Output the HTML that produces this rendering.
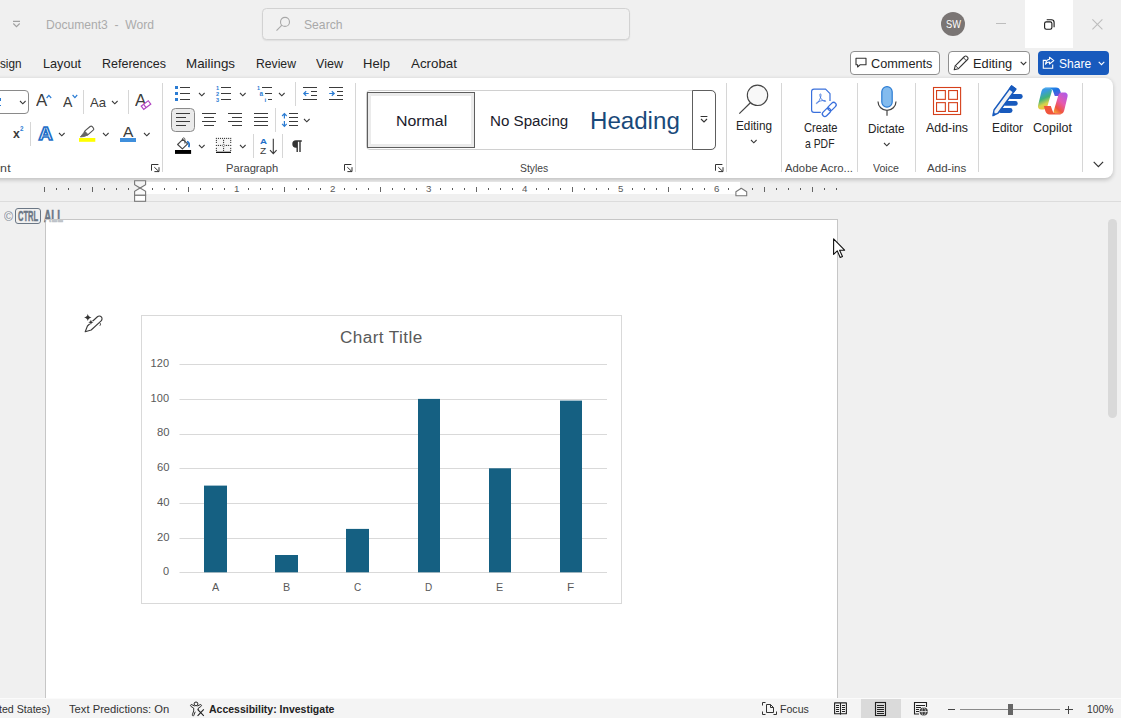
<!DOCTYPE html>
<html><head><meta charset="utf-8"><title>Document3 - Word</title>
<style>
html,body{margin:0;padding:0;}
html{width:1121px;height:718px;overflow:hidden;}
body{width:1121px;height:718px;overflow:hidden;background:#f0f0f0;font-family:"Liberation Sans",sans-serif;position:relative;}
.t{position:absolute;white-space:pre;display:block;}
.b{position:absolute;box-sizing:border-box;display:block;}
svg{overflow:visible;}
</style></head><body>
<div class="b" style="left:0px;top:0px;width:1121px;height:78px;background:#f0f0f0;"></div>
<svg class="b" style="left:12px;top:19px;" width="10" height="10" viewBox="0 0 10 10"><path d="M1 2.400h7M1.300 4.500l3.200 3.200 3.200-3.200" fill="none" stroke="#a0a0a0" stroke-width="1.100"/></svg>
<span class="t" style="left:46.00px;top:18.00px;font-size:13px;line-height:13px;color:#ababab;transform:scale(0.930,1.000);transform-origin:0 84.6%;">Document3  -  Word</span>
<div class="b" style="left:262px;top:7.5px;width:368px;height:32.5px;background:#f1f1f1;border:1px solid #d2d2d2;border-radius:4.5px;box-shadow:0 1px 1.5px rgba(0,0,0,0.07);"></div>
<svg class="b" style="left:276px;top:17px;" width="16" height="16" viewBox="0 0 16 16"><circle cx="9" cy="4.900" r="4.500" fill="none" stroke="#a8a8a8" stroke-width="1.100"/><path d="M5.900 8.200L0.500 13.700" stroke="#a8a8a8" stroke-width="1.100"/></svg>
<span class="t" style="left:304.30px;top:18.00px;font-size:13px;line-height:13px;color:#a9a9a9;transform:scale(0.935,1.000);transform-origin:0 84.6%;">Search</span>
<div class="b" style="left:941px;top:12px;width:24px;height:24px;background:#7a7574;border-radius:50%;"></div>
<span class="t" style="left:945.50px;top:18.75px;font-size:10.5px;line-height:10.5px;color:#fff;transform:scale(0.887,1.000);transform-origin:0 88.1%;">SW</span>
<div class="b" style="left:996px;top:23px;width:10px;height:1px;background:#bdbdbd;"></div>
<div class="b" style="left:1025px;top:0px;width:48px;height:48px;background:#fff;"></div>
<svg class="b" style="left:1043.5px;top:18.5px;" width="12" height="12" viewBox="0 0 12 12"><rect x="0.600" y="2.900" width="7.300" height="7.300" rx="1.700" fill="none" stroke="#1a1a1a" stroke-width="1.100"/><path d="M2.700 0.800h4.700a2.700 2.700 0 0 1 2.700 2.700v4.700" fill="none" stroke="#1a1a1a" stroke-width="1.100"/></svg>
<svg class="b" style="left:1091.5px;top:19px;" width="12" height="12" viewBox="0 0 12 12"><path d="M0.400 0.400l10 10M10.400 0.400l-10 10" stroke="#bdbdbd" stroke-width="1.100"/></svg>
<span class="t" style="left:0.00px;top:57.00px;font-size:13px;line-height:13px;color:#242424;transform:scale(0.901,1.000);transform-origin:0 84.6%;">sign</span>
<span class="t" style="left:43.00px;top:57.00px;font-size:13px;line-height:13px;color:#242424;transform:scale(0.974,1.000);transform-origin:0 84.6%;">Layout</span>
<span class="t" style="left:102.00px;top:57.00px;font-size:13px;line-height:13px;color:#242424;transform:scale(0.962,1.000);transform-origin:0 84.6%;">References</span>
<span class="t" style="left:186.00px;top:57.00px;font-size:13px;line-height:13px;color:#242424;letter-spacing:-0.00px;transform:scale(1.028,1.000);transform-origin:0 84.6%;">Mailings</span>
<span class="t" style="left:256.00px;top:57.00px;font-size:13px;line-height:13px;color:#242424;transform:scale(0.937,1.000);transform-origin:0 84.6%;">Review</span>
<span class="t" style="left:316.00px;top:57.00px;font-size:13px;line-height:13px;color:#242424;transform:scale(0.965,1.000);transform-origin:0 84.6%;">View</span>
<span class="t" style="left:363.00px;top:57.00px;font-size:13px;line-height:13px;color:#242424;letter-spacing:0.08px;">Help</span>
<span class="t" style="left:411.00px;top:57.00px;font-size:13px;line-height:13px;color:#242424;transform:scale(1.026,1.000);transform-origin:0 84.6%;">Acrobat</span>
<div class="b" style="left:850px;top:51px;width:90px;height:24px;background:#fff;border:1px solid #8f8f8f;border-radius:4px;"></div>
<svg class="b" style="left:855px;top:57px;" width="12" height="12" viewBox="0 0 12 12"><path d="M1 1.2h10v6.6H5L2.6 10V7.8H1z" fill="none" stroke="#333" stroke-width="1.1" stroke-linejoin="round"/></svg>
<span class="t" style="left:871.30px;top:57.00px;font-size:13px;line-height:13px;color:#242424;transform:scale(0.977,1.000);transform-origin:0 84.6%;">Comments</span>
<div class="b" style="left:948px;top:51px;width:82px;height:24px;background:#fff;border:1px solid #8f8f8f;border-radius:4px;"></div>
<svg class="b" style="left:953px;top:55px;" width="16" height="16" viewBox="0 0 16 16"><path d="M1.2 14.8l1-4L11.5 1.5a1.6 1.6 0 0 1 2.4 0l.6.6a1.6 1.6 0 0 1 0 2.4L5.2 13.8z" fill="none" stroke="#333" stroke-width="1.1" stroke-linejoin="round"/><path d="M2.400 10.600l3 3M10.400 2.700l3 3" stroke="#333" stroke-width="0.900"/></svg>
<span class="t" style="left:973.30px;top:57.00px;font-size:13px;line-height:13px;color:#242424;transform:scale(0.984,1.000);transform-origin:0 84.6%;">Editing</span>
<svg class="b" style="left:1019.5px;top:61px;" width="7" height="5" viewBox="0 0 7 5"><path d="M0.7 0.8l2.8 2.8 2.8-2.8" fill="none" stroke="#333" stroke-width="1.1"/></svg>
<div class="b" style="left:1038px;top:51px;width:71px;height:24px;background:#185abd;border-radius:4px;"></div>
<svg class="b" style="left:1042px;top:56px;" width="13" height="13" viewBox="0 0 13 13"><path d="M4.200 4.400H1.300V12.200H10.700V8.600" fill="none" stroke="#fff" stroke-width="1.100"/><path d="M7.5 1.2L11.8 4.6 7.5 8V6C5.5 6 4.3 6.8 3.5 8.2 3.8 5.4 5.2 3.6 7.5 3.3z" fill="none" stroke="#fff" stroke-width="1.1" stroke-linejoin="round"/></svg>
<span class="t" style="left:1059.30px;top:57.00px;font-size:13px;line-height:13px;color:#fff;transform:scale(0.926,1.000);transform-origin:0 84.6%;">Share</span>
<svg class="b" style="left:1097.5px;top:61px;" width="7" height="5" viewBox="0 0 7 5"><path d="M0.7 0.8l2.8 2.8 2.8-2.8" fill="none" stroke="#fff" stroke-width="1.1"/></svg>
<div class="b" style="left:-20px;top:78px;width:1133px;height:99.5px;background:#fff;border-radius:0 8px 8px 0;box-shadow:0 1.5px 4px rgba(0,0,0,0.2);"></div>
<div class="b" style="left:162.0px;top:83px;width:1px;height:89px;background:#d6d6d6;"></div>
<div class="b" style="left:355.0px;top:83px;width:1px;height:89px;background:#d6d6d6;"></div>
<div class="b" style="left:726.0px;top:83px;width:1px;height:89px;background:#d6d6d6;"></div>
<div class="b" style="left:781.0px;top:83px;width:1px;height:89px;background:#d6d6d6;"></div>
<div class="b" style="left:857.0px;top:83px;width:1px;height:89px;background:#d6d6d6;"></div>
<div class="b" style="left:915.0px;top:83px;width:1px;height:89px;background:#d6d6d6;"></div>
<div class="b" style="left:978.0px;top:83px;width:1px;height:89px;background:#d6d6d6;"></div>
<div class="b" style="left:1082.0px;top:83px;width:1px;height:89px;background:#d6d6d6;"></div>
<span class="t" style="left:0.00px;top:162.20px;font-size:11.6px;line-height:11.6px;color:#444;letter-spacing:0.41px;transform:scale(1.070,1.000);transform-origin:0 84.5%;">nt</span>
<span class="t" style="left:225.50px;top:162.20px;font-size:11.6px;line-height:11.6px;color:#444;transform:scale(0.965,1.000);transform-origin:0 84.5%;">Paragraph</span>
<span class="t" style="left:519.50px;top:162.20px;font-size:11.6px;line-height:11.6px;color:#444;transform:scale(0.893,1.000);transform-origin:0 84.5%;">Styles</span>
<span class="t" style="left:785.00px;top:162.20px;font-size:11.6px;line-height:11.6px;color:#444;transform:scale(0.976,1.000);transform-origin:0 84.5%;">Adobe Acro...</span>
<span class="t" style="left:873.40px;top:162.20px;font-size:11.6px;line-height:11.6px;color:#444;transform:scale(0.912,1.000);transform-origin:0 84.5%;">Voice</span>
<span class="t" style="left:927.30px;top:162.20px;font-size:11.6px;line-height:11.6px;color:#444;transform:scale(0.997,1.000);transform-origin:0 84.5%;">Add-ins</span>
<div class="b" style="left:-10px;top:90px;width:38.5px;height:24px;background:#fff;border:1px solid #8a8a8a;border-radius:4px;"></div>
<div class="b" style="left:0px;top:98.3px;width:0.9px;height:2.8px;background:#2b7cd3;"></div>
<div class="b" style="left:0px;top:104.6px;width:1px;height:1.3px;background:#2b7cd3;"></div>
<svg class="b" style="left:18.5px;top:99.9px;" width="7.6" height="4.8" viewBox="0 0 7.6 4.8"><path d="M1 1l2.8 2.8 2.8 -2.8" fill="none" stroke="#3b3b3b" stroke-width="1.1"/></svg>
<span class="t" style="left:36.00px;top:92.40px;font-size:17.2px;line-height:17.2px;color:#3b3b3b;transform:scale(0.976,1.000);transform-origin:0 84.9%;">A</span>
<svg class="b" style="left:45.7px;top:94.3px;" width="6" height="5" viewBox="0 0 6 5"><path d="M0.6 4l2.3-2.6L5.2 4" fill="none" stroke="#2b7cd3" stroke-width="1.2"/></svg>
<span class="t" style="left:63.30px;top:95.00px;font-size:14px;line-height:14px;color:#3b3b3b;transform:scale(1.006,1.000);transform-origin:0 85.7%;">A</span>
<svg class="b" style="left:71.7px;top:94.3px;" width="6" height="5" viewBox="0 0 6 5"><path d="M0.6 1l2.3 2.6L5.2 1" fill="none" stroke="#2b7cd3" stroke-width="1.2"/></svg>
<div class="b" style="left:83px;top:90px;width:1px;height:24px;background:#d6d6d6;"></div>
<span class="t" style="left:90.40px;top:96.70px;font-size:12.6px;line-height:12.6px;color:#3b3b3b;letter-spacing:0.00px;transform:scale(1.043,1.000);transform-origin:0 81.7%;">Aa</span>
<svg class="b" style="left:110.8px;top:99.9px;" width="7.6" height="4.8" viewBox="0 0 7.6 4.8"><path d="M1 1l2.8 2.8 2.8 -2.8" fill="none" stroke="#3b3b3b" stroke-width="1.1"/></svg>
<div class="b" style="left:128px;top:90px;width:1px;height:24px;background:#d6d6d6;"></div>
<span class="t" style="left:135.30px;top:92.40px;font-size:17.2px;line-height:17.2px;color:#3b3b3b;transform:scale(0.984,1.000);transform-origin:0 84.9%;">A</span>
<svg class="b" style="left:0px;top:0px;" width="160" height="115" viewBox="0 0 160 115"><g transform="rotate(-37 146 105.100)" fill="#fff" stroke="#b146c2" stroke-width="1.200"><rect x="141.600" y="103" width="8.800" height="4.200"/><path d="M144.600 103v4.200"/></g></svg>
<span class="t" style="left:12.60px;top:127.00px;font-size:13px;line-height:13px;color:#3b3b3b;transform:scale(0.942,1.000);transform-origin:0 84.6%;font-weight:bold;">x</span>
<span class="t" style="left:19.90px;top:124.90px;font-size:7.2px;line-height:7.2px;color:#2b7cd3;transform:scale(0.876,1.000);transform-origin:0 84.7%;font-weight:bold;">2</span>
<div class="b" style="left:30px;top:122px;width:1px;height:24px;background:#d6d6d6;"></div>
<svg class="b" style="left:36px;top:124px;" width="19" height="18" viewBox="0 0 19 18"><text x="9.5" y="15.8" text-anchor="middle" font-family="Liberation Sans" font-weight="bold" font-size="18.800" fill="#fff" stroke="#1e6fc8" stroke-width="1.600" textLength="14.200" lengthAdjust="spacingAndGlyphs">A</text></svg>
<svg class="b" style="left:58.2px;top:131.9px;" width="7.6" height="4.8" viewBox="0 0 7.6 4.8"><path d="M1 1l2.8 2.8 2.8 -2.8" fill="none" stroke="#3b3b3b" stroke-width="1.1"/></svg>
<svg class="b" style="left:0px;top:0px;" width="160" height="145" viewBox="0 0 160 145"><g transform="rotate(-40 89 130.600)"><rect x="84.200" y="128.200" width="9.800" height="4.800" rx="1.500" fill="#fff" stroke="#555" stroke-width="1.100"/></g><path d="M84.900 131.300l3.300 3.400-3.600 1.700-4.300.6z" fill="#666" stroke="#666" stroke-width="0.800" stroke-linejoin="round"/><rect x="79" y="138" width="16.300" height="3.800" fill="#ffff00"/></svg>
<svg class="b" style="left:101.5px;top:131.9px;" width="7.6" height="4.8" viewBox="0 0 7.6 4.8"><path d="M1 1l2.8 2.8 2.8 -2.8" fill="none" stroke="#3b3b3b" stroke-width="1.1"/></svg>
<span class="t" style="left:123.40px;top:123.90px;font-size:15.2px;line-height:15.2px;color:#3b3b3b;transform:scale(1.025,1.000);transform-origin:0 86.2%;">A</span>
<div class="b" style="left:120px;top:138px;width:16.2px;height:4px;background:#3f8fdc;"></div>
<svg class="b" style="left:142.7px;top:131.9px;" width="7.6" height="4.8" viewBox="0 0 7.6 4.8"><path d="M1 1l2.8 2.8 2.8 -2.8" fill="none" stroke="#3b3b3b" stroke-width="1.1"/></svg>
<svg class="b" style="left:151px;top:164px;" width="9" height="9" viewBox="0 0 9 9"><path d="M0.500 6.700V0.500H7.400" fill="none" stroke="#333" stroke-width="1"/><path d="M3.300 3.200L7.700 7.300M8 3.200V7.600H3.400" fill="none" stroke="#333" stroke-width="1"/></svg>
<div class="b" style="left:171px;top:108px;width:24px;height:24px;background:#ebebeb;border:1px solid #8a8a8a;border-radius:4.5px;"></div>
<svg class="b" style="left:0px;top:0px;" width="400" height="180" viewBox="0 0 400 180"><g shape-rendering="crispEdges"><rect x="175" y="86" width="3" height="3" fill="#2b7cd3"/><rect x="180" y="87" width="10" height="1" fill="#3b3b3b"/><rect x="175" y="92" width="3" height="3" fill="#2b7cd3"/><rect x="180" y="93" width="10" height="1" fill="#3b3b3b"/><rect x="175" y="98" width="3" height="3" fill="#2b7cd3"/><rect x="180" y="99" width="10" height="1" fill="#3b3b3b"/><rect x="221" y="87" width="10" height="1" fill="#3b3b3b"/><rect x="221" y="93" width="10" height="1" fill="#3b3b3b"/><rect x="221" y="99" width="10" height="1" fill="#3b3b3b"/><rect x="262" y="87" width="10" height="1" fill="#3b3b3b"/><rect x="265" y="93" width="7" height="1" fill="#3b3b3b"/><rect x="268" y="99" width="4" height="1" fill="#3b3b3b"/><rect x="303" y="87" width="14" height="1" fill="#3b3b3b"/><rect x="311" y="91" width="6" height="1" fill="#3b3b3b"/><rect x="311" y="95" width="6" height="1" fill="#3b3b3b"/><rect x="303" y="99" width="14" height="1" fill="#3b3b3b"/><rect x="329" y="87" width="14" height="1" fill="#3b3b3b"/><rect x="337" y="91" width="6" height="1" fill="#3b3b3b"/><rect x="337" y="95" width="6" height="1" fill="#3b3b3b"/><rect x="329" y="99" width="14" height="1" fill="#3b3b3b"/><rect x="176" y="113" width="14" height="1" fill="#3b3b3b"/><rect x="202" y="113" width="14" height="1" fill="#3b3b3b"/><rect x="228" y="113" width="14" height="1" fill="#3b3b3b"/><rect x="254" y="113" width="14" height="1" fill="#3b3b3b"/><rect x="289" y="113" width="9" height="1" fill="#3b3b3b"/><rect x="176" y="117" width="10" height="1" fill="#3b3b3b"/><rect x="204" y="117" width="10" height="1" fill="#3b3b3b"/><rect x="232" y="117" width="10" height="1" fill="#3b3b3b"/><rect x="254" y="117" width="14" height="1" fill="#3b3b3b"/><rect x="289" y="117" width="9" height="1" fill="#3b3b3b"/><rect x="176" y="121" width="14" height="1" fill="#3b3b3b"/><rect x="202" y="121" width="14" height="1" fill="#3b3b3b"/><rect x="228" y="121" width="14" height="1" fill="#3b3b3b"/><rect x="254" y="121" width="14" height="1" fill="#3b3b3b"/><rect x="289" y="121" width="9" height="1" fill="#3b3b3b"/><rect x="176" y="125" width="10" height="1" fill="#3b3b3b"/><rect x="204" y="125" width="10" height="1" fill="#3b3b3b"/><rect x="232" y="125" width="10" height="1" fill="#3b3b3b"/><rect x="254" y="125" width="14" height="1" fill="#3b3b3b"/><rect x="289" y="125" width="9" height="1" fill="#3b3b3b"/></g><text x="216" y="89.6" font-family="Liberation Sans" font-weight="bold" font-size="5.600" fill="#2b7cd3">1</text><text x="216" y="95.6" font-family="Liberation Sans" font-weight="bold" font-size="5.600" fill="#2b7cd3">2</text><text x="216" y="101.6" font-family="Liberation Sans" font-weight="bold" font-size="5.600" fill="#2b7cd3">3</text><text x="257" y="89.600" font-family="Liberation Sans" font-weight="bold" font-size="5.400" fill="#2b7cd3">1</text><text x="259.600" y="96" font-family="Liberation Sans" font-weight="bold" font-size="6.400" fill="#2b7cd3">a</text><text x="264.600" y="101.600" font-family="Liberation Sans" font-weight="bold" font-size="6" fill="#2b7cd3">i</text><path d="M308.700 93.500H303.900M306.200 91.200L303.800 93.500 306.200 95.800" fill="none" stroke="#2b7cd3" stroke-width="1.200"/><path d="M329.200 93.500H334.200M331.800 91.200l2.400 2.300-2.400 2.300" fill="none" stroke="#2b7cd3" stroke-width="1.200"/><path d="M284.400 113.700v4.800M282.100 116L284.400 113.600 286.700 116M284.400 121v5.200M282.100 123.900L284.400 126.300 286.700 123.900" fill="none" stroke="#2b7cd3" stroke-width="1.200"/></svg>
<svg class="b" style="left:197.7px;top:92.1px;" width="7.6" height="4.8" viewBox="0 0 7.6 4.8"><path d="M1 1l2.8 2.8 2.8 -2.8" fill="none" stroke="#3b3b3b" stroke-width="1.1"/></svg>
<svg class="b" style="left:238.5px;top:92.1px;" width="7.6" height="4.8" viewBox="0 0 7.6 4.8"><path d="M1 1l2.8 2.8 2.8 -2.8" fill="none" stroke="#3b3b3b" stroke-width="1.1"/></svg>
<svg class="b" style="left:277.6px;top:92.1px;" width="7.6" height="4.8" viewBox="0 0 7.6 4.8"><path d="M1 1l2.8 2.8 2.8 -2.8" fill="none" stroke="#3b3b3b" stroke-width="1.1"/></svg>
<svg class="b" style="left:302.6px;top:118.2px;" width="7.6" height="4.8" viewBox="0 0 7.6 4.8"><path d="M1 1l2.8 2.8 2.8 -2.8" fill="none" stroke="#3b3b3b" stroke-width="1.1"/></svg>
<svg class="b" style="left:197.7px;top:144.1px;" width="7.6" height="4.8" viewBox="0 0 7.6 4.8"><path d="M1 1l2.8 2.8 2.8 -2.8" fill="none" stroke="#3b3b3b" stroke-width="1.1"/></svg>
<svg class="b" style="left:238.5px;top:144.1px;" width="7.6" height="4.8" viewBox="0 0 7.6 4.8"><path d="M1 1l2.8 2.8 2.8 -2.8" fill="none" stroke="#3b3b3b" stroke-width="1.1"/></svg>
<div class="b" style="left:295px;top:82px;width:1px;height:24px;background:#d6d6d6;"></div>
<div class="b" style="left:275px;top:108px;width:1px;height:24px;background:#d6d6d6;"></div>
<svg class="b" style="left:0px;top:0px;" width="200" height="160" viewBox="0 0 200 160"><path d="M177.600 144.500L182.800 139.400 187.600 143.800 182.400 148.800z" fill="#fff" stroke="#444" stroke-width="1.100" stroke-linejoin="round"/><path d="M182.400 139.800c-.2-1.100.3-1.800 1.100-1.900.9-.1 1.400.6 1.400 1.800v3.900" fill="none" stroke="#444" stroke-width="0.900"/><path d="M186.900 141.600c2 .300 2.900 2.400 1.900 5.700" fill="none" stroke="#1e6fc8" stroke-width="1.700"/><rect x="175" y="150" width="16.100" height="3.900" fill="#000"/></svg>
<svg class="b" style="left:0px;top:0px;" width="240" height="160" viewBox="0 0 240 160"><rect x="216.900" y="138.900" width="13.300" height="12.600" fill="#f6f6f6"/><g fill="#333"><rect x="215.85" y="137.85" width="1.100" height="1.100"/><rect x="215.85" y="139.85" width="1.100" height="1.100"/><rect x="215.85" y="141.85" width="1.100" height="1.100"/><rect x="215.85" y="144.90" width="1.100" height="1.100"/><rect x="215.85" y="147.85" width="1.100" height="1.100"/><rect x="215.85" y="149.85" width="1.100" height="1.100"/><rect x="217.85" y="144.90" width="1.100" height="1.100"/><rect x="217.89" y="137.85" width="1.100" height="1.100"/><rect x="219.94" y="137.85" width="1.100" height="1.100"/><rect x="219.95" y="144.90" width="1.100" height="1.100"/><rect x="221.98" y="137.85" width="1.100" height="1.100"/><rect x="223.00" y="139.85" width="1.100" height="1.100"/><rect x="223.00" y="141.85" width="1.100" height="1.100"/><rect x="223.00" y="147.85" width="1.100" height="1.100"/><rect x="223.00" y="149.85" width="1.100" height="1.100"/><rect x="224.02" y="137.85" width="1.100" height="1.100"/><rect x="226.05" y="144.90" width="1.100" height="1.100"/><rect x="226.07" y="137.85" width="1.100" height="1.100"/><rect x="228.05" y="144.90" width="1.100" height="1.100"/><rect x="228.11" y="137.85" width="1.100" height="1.100"/><rect x="230.15" y="137.85" width="1.100" height="1.100"/><rect x="230.15" y="139.85" width="1.100" height="1.100"/><rect x="230.15" y="141.85" width="1.100" height="1.100"/><rect x="230.15" y="144.90" width="1.100" height="1.100"/><rect x="230.15" y="147.85" width="1.100" height="1.100"/><rect x="230.15" y="149.85" width="1.100" height="1.100"/></g><path d="M223.550 144.100l1.350 1.350-1.350 1.350-1.350-1.350z" fill="#fff" stroke="#333" stroke-width="0.700"/><rect x="216" y="151.700" width="15" height="1.300" fill="#111"/></svg>
<div class="b" style="left:252.5px;top:134px;width:1px;height:24px;background:#d6d6d6;"></div>
<span class="t" style="left:260.30px;top:137.50px;font-size:8px;line-height:8px;color:#1e6fc8;transform:scale(1.211,1.000);transform-origin:0 81.2%;font-weight:bold;">A</span>
<span class="t" style="left:260.30px;top:146.50px;font-size:9px;line-height:9px;color:#3b3b3b;transform:scale(1.129,1.000);transform-origin:0 83.3%;">Z</span>
<svg class="b" style="left:268.5px;top:138px;" width="9" height="17" viewBox="0 0 9 17"><path d="M4.300 0.700v14.800M1 12.200l3.300 3.400 3.300-3.400" fill="none" stroke="#3b3b3b" stroke-width="1.100"/></svg>
<div class="b" style="left:282px;top:134px;width:1px;height:24px;background:#d6d6d6;"></div>
<svg class="b" style="left:291px;top:139.7px;" width="12" height="13" viewBox="0 0 12 13"><path d="M5.600 0.300H10.800V1.700H9.700V12.100H8.300V1.700H6.900V12.100H5.500V7.700H5A3.700 3.700 0 0 1 5 0.300z" fill="#333"/></svg>
<svg class="b" style="left:343.9px;top:164px;" width="9" height="9" viewBox="0 0 9 9"><path d="M0.500 6.700V0.500H7.400" fill="none" stroke="#333" stroke-width="1"/><path d="M3.300 3.200L7.700 7.300M8 3.200V7.600H3.400" fill="none" stroke="#333" stroke-width="1"/></svg>
<div class="b" style="left:366px;top:90px;width:350px;height:59.5px;background:#fff;border:1px solid #d0d0d0;border-radius:4px;"></div>
<div class="b" style="left:367px;top:92px;width:108px;height:55.7px;background:#fff;border:1px solid #5e5e5e;box-shadow:inset 0 0 0 3px #ebebeb;"></div>
<span class="t" style="left:395.70px;top:112.90px;font-size:15.2px;line-height:15.2px;color:#1b1b2b;transform:scale(1.047,1.000);transform-origin:0 86.2%;">Normal</span>
<span class="t" style="left:489.70px;top:112.90px;font-size:15.2px;line-height:15.2px;color:#1b1b2b;transform:scale(0.996,1.000);transform-origin:0 86.2%;">No Spacing</span>
<span class="t" style="left:589.60px;top:109.20px;font-size:24.6px;line-height:24.6px;color:#19497a;transform:scale(0.980,1.000);transform-origin:0 84.6%;">Heading</span>
<div class="b" style="left:692px;top:90px;width:24px;height:59.5px;background:#fff;border:1px solid #5e5e5e;border-radius:0 5px 5px 0;"></div>
<svg class="b" style="left:699.5px;top:115px;" width="8" height="8" viewBox="0 0 8 8"><path d="M0.600 1.500h6.800" stroke="#333" stroke-width="1"/><path d="M1 4l3 3 3-3" fill="none" stroke="#333" stroke-width="1.100"/></svg>
<svg class="b" style="left:715px;top:164px;" width="9" height="9" viewBox="0 0 9 9"><path d="M0.500 6.700V0.500H7.400" fill="none" stroke="#333" stroke-width="1"/><path d="M3.300 3.200L7.700 7.300M8 3.200V7.600H3.400" fill="none" stroke="#333" stroke-width="1"/></svg>
<svg class="b" style="left:738px;top:84px;" width="32" height="31" viewBox="0 0 32 31"><circle cx="19.5" cy="11.3" r="10.2" fill="#f8f8f8" stroke="#444" stroke-width="1.1"/><path d="M12.4 18.7L1.3 29.6" stroke="#444" stroke-width="1.2"/></svg>
<span class="t" style="left:735.70px;top:119.70px;font-size:12.6px;line-height:12.6px;color:#242424;transform:scale(0.934,1.000);transform-origin:0 81.7%;">Editing</span>
<svg class="b" style="left:750.0px;top:138.8px;" width="7.6" height="4.8" viewBox="0 0 7.6 4.8"><path d="M1 1l2.8 2.8 2.8 -2.8" fill="none" stroke="#3b3b3b" stroke-width="1.1"/></svg>
<svg class="b" style="left:810px;top:88px;" width="27" height="30" viewBox="0 0 27 30"><path d="M10.800 24.400H4A2.400 2.400 0 0 1 1.600 22V3.600A2.400 2.400 0 0 1 4 1.200h11.600l4.400 4.400V13" fill="none" stroke="#3a70dc" stroke-width="1.200" stroke-linejoin="round"/><path d="M10.400 5.800c-.8 0-.8 1.500 0 3.400.9 2.100 2.700 3.900 4.400 4.300 1.100.3 1.300-.8.200-1-2.100-.3-6.200.6-8.300 2.100-.9.700-.2 1.500.6.700 1.500-1.500 3-4.700 3.600-7.200.3-1.300-.1-2.300-.5-2.300z" fill="none" stroke="#3a70dc" stroke-width="0.800"/><g fill="none" stroke="#3a70dc" stroke-width="1.300"><rect x="11.700" y="21.800" width="9.600" height="5" rx="2.500" transform="rotate(-45 16.500 24.300)"/><rect x="17.200" y="16" width="9.600" height="5" rx="2.500" transform="rotate(-45 22 18.500)"/></g></svg>
<span class="t" style="left:803.50px;top:121.70px;font-size:12.6px;line-height:12.6px;color:#242424;transform:scale(0.886,1.000);transform-origin:0 81.7%;">Create</span>
<span class="t" style="left:805.00px;top:137.70px;font-size:12.6px;line-height:12.6px;color:#242424;transform:scale(0.826,1.000);transform-origin:0 81.7%;">a PDF</span>
<svg class="b" style="left:876px;top:84px;" width="22" height="33" viewBox="0 0 22 33"><rect x="5.800" y="2.600" width="10.400" height="20.600" rx="5.200" fill="#83bbee" stroke="#2b7cd3" stroke-width="1.200"/><path d="M2 17.400a9 9 0 0 0 18 0M11 26.400v5.400" fill="none" stroke="#444" stroke-width="1.200"/></svg>
<span class="t" style="left:868.40px;top:122.70px;font-size:12.6px;line-height:12.6px;color:#242424;transform:scale(0.933,1.000);transform-origin:0 81.7%;">Dictate</span>
<svg class="b" style="left:883.2px;top:142.0px;" width="7.6" height="4.8" viewBox="0 0 7.6 4.8"><path d="M1 1l2.8 2.8 2.8 -2.8" fill="none" stroke="#3b3b3b" stroke-width="1.1"/></svg>
<svg class="b" style="left:933px;top:87px;" width="29" height="29" viewBox="0 0 29 29"><rect x="0.500" y="0.500" width="27.100" height="27" fill="none" stroke="#d5401b" stroke-width="1.100"/><g fill="none" stroke="#d5401b" stroke-width="1.100"><rect x="3.550" y="3.550" width="8.800" height="8.800"/><rect x="15.650" y="3.550" width="8.800" height="8.800"/><rect x="3.550" y="15.650" width="8.800" height="8.800"/><rect x="15.650" y="15.650" width="8.800" height="8.800"/></g></svg>
<span class="t" style="left:926.00px;top:121.70px;font-size:12.6px;line-height:12.6px;color:#242424;transform:scale(0.983,1.000);transform-origin:0 81.7%;">Add-ins</span>
<svg class="b" style="left:992px;top:85px;" width="32" height="32" viewBox="0 0 32 32"><g stroke="#185abd" stroke-width="4.800" stroke-linecap="round"><path d="M18.500 11.500h9.800"/><path d="M13.500 18.400h9.800"/><path d="M8.500 25.500h9.600"/></g><path d="M1.00 30.70L2.02 25.00L19.64 0.99L23.76 4.01L6.13 28.02Z" fill="#f3f3f3" stroke="#185abd" stroke-width="1.400" stroke-linejoin="round"/><path d="M17.51 3.89L19.64 0.99L23.76 4.01L21.63 6.91Z" fill="#185abd" stroke="#185abd" stroke-width="1.400" stroke-linejoin="round"/><path d="M1.00 30.70L1.57 27.39L3.98 29.17Z" fill="#185abd" stroke="#185abd" stroke-width="0.600"/></svg>
<span class="t" style="left:992.00px;top:121.70px;font-size:12.6px;line-height:12.6px;color:#242424;transform:scale(0.942,1.000);transform-origin:0 81.7%;">Editor</span>
<svg class="b" style="left:1037px;top:86px;" width="32" height="30" viewBox="0 0 32 30"><defs>
<linearGradient id="cg1" x1="0" y1="0" x2="1" y2="1"><stop offset="0" stop-color="#2aa4f4"/><stop offset="0.5" stop-color="#1f6fe0"/><stop offset="1" stop-color="#7a4be0"/></linearGradient>
<linearGradient id="cg2" x1="0" y1="0" x2="0.300" y2="1"><stop offset="0" stop-color="#3a9be0"/><stop offset="0.250" stop-color="#3a9be0"/><stop offset="0.550" stop-color="#3fb37a"/><stop offset="0.820" stop-color="#d9d34a"/><stop offset="1" stop-color="#f0c040"/></linearGradient>
<linearGradient id="cg3" x1="0.800" y1="0" x2="0.200" y2="1"><stop offset="0" stop-color="#b05be6"/><stop offset="0.450" stop-color="#e65ab0"/><stop offset="0.800" stop-color="#f0553c"/><stop offset="1" stop-color="#f59a3a"/></linearGradient></defs>
<path d="M9.500 1.500h9.500c2.200 0 3.600 1.200 4.200 3.200l1.600 5.300h-7l-1.800-5c-.5-1.500-1.500-2.200-3-2.200H6.500c.6-.8 1.700-1.300 3-1.300z" fill="url(#cg1)"/>
<path d="M6.800 2.600h6c1.600 0 2.500.9 2 2.600l-4.400 15c-.6 2-2 3.200-4 3.200H4.200c-2.400 0-3.800-1.800-3.100-4.200l3-12.400c.5-2.600 1.400-4.200 2.700-4.200z" fill="url(#cg2)"/>
<path d="M24.800 27.400h-6c-1.600 0-2.500-.9-2-2.600l4.400-15c.6-2 2-3.200 4-3.200h2.200c2.400 0 3.800 1.800 3.100 4.200l-3 12.400c-.5 2.600-1.400 4.200-2.700 4.200z" fill="url(#cg3)"/>
<path d="M22.100 28.500h-9.500c-2.200 0-3.600-1.200-4.200-3.200L6.800 20h7l1.800 5c.5 1.500 1.500 2.200 3 2.200h6.500c-.6.800-1.700 1.300-3 1.300z" fill="#f0553c"/></svg>
<span class="t" style="left:1033.00px;top:121.70px;font-size:12.6px;line-height:12.6px;color:#242424;transform:scale(0.994,1.000);transform-origin:0 81.7%;">Copilot</span>
<svg class="b" style="left:1093px;top:161px;" width="11" height="7" viewBox="0 0 11 7"><path d="M0.700 0.800l4.700 4.800 4.700-4.800" fill="none" stroke="#333" stroke-width="1.200"/></svg>
<div class="b" style="left:140.5px;top:182px;width:599.5px;height:12px;background:#fff;"></div>
<div class="b" style="left:0px;top:201px;width:1121px;height:1px;background:#dcdcdc;"></div>
<svg class="b" style="left:0px;top:0px;" width="1121" height="210" viewBox="0 0 1121 210"><rect x="44.0" y="187" width="1" height="5" fill="#666"/><rect x="56.0" y="188" width="1" height="2" fill="#5a5a5a"/><rect x="68.0" y="188" width="1" height="2" fill="#5a5a5a"/><rect x="80.0" y="188" width="1" height="2" fill="#5a5a5a"/><rect x="92.0" y="187" width="1" height="5" fill="#666"/><rect x="104.0" y="188" width="1" height="2" fill="#5a5a5a"/><rect x="116.0" y="188" width="1" height="2" fill="#5a5a5a"/><rect x="128.0" y="188" width="1" height="2" fill="#5a5a5a"/><rect x="140.0" y="187" width="1" height="5" fill="#666"/><rect x="152.0" y="188" width="1" height="2" fill="#5a5a5a"/><rect x="164.0" y="188" width="1" height="2" fill="#5a5a5a"/><rect x="176.0" y="188" width="1" height="2" fill="#5a5a5a"/><rect x="188.0" y="187" width="1" height="5" fill="#666"/><rect x="200.0" y="188" width="1" height="2" fill="#5a5a5a"/><rect x="212.0" y="188" width="1" height="2" fill="#5a5a5a"/><rect x="224.0" y="188" width="1" height="2" fill="#5a5a5a"/><rect x="248.0" y="188" width="1" height="2" fill="#5a5a5a"/><rect x="260.0" y="188" width="1" height="2" fill="#5a5a5a"/><rect x="272.0" y="188" width="1" height="2" fill="#5a5a5a"/><rect x="284.0" y="187" width="1" height="5" fill="#666"/><rect x="296.0" y="188" width="1" height="2" fill="#5a5a5a"/><rect x="308.0" y="188" width="1" height="2" fill="#5a5a5a"/><rect x="320.0" y="188" width="1" height="2" fill="#5a5a5a"/><rect x="344.0" y="188" width="1" height="2" fill="#5a5a5a"/><rect x="356.0" y="188" width="1" height="2" fill="#5a5a5a"/><rect x="368.0" y="188" width="1" height="2" fill="#5a5a5a"/><rect x="380.0" y="187" width="1" height="5" fill="#666"/><rect x="392.0" y="188" width="1" height="2" fill="#5a5a5a"/><rect x="404.0" y="188" width="1" height="2" fill="#5a5a5a"/><rect x="416.0" y="188" width="1" height="2" fill="#5a5a5a"/><rect x="440.0" y="188" width="1" height="2" fill="#5a5a5a"/><rect x="452.0" y="188" width="1" height="2" fill="#5a5a5a"/><rect x="464.0" y="188" width="1" height="2" fill="#5a5a5a"/><rect x="476.0" y="187" width="1" height="5" fill="#666"/><rect x="488.0" y="188" width="1" height="2" fill="#5a5a5a"/><rect x="500.0" y="188" width="1" height="2" fill="#5a5a5a"/><rect x="512.0" y="188" width="1" height="2" fill="#5a5a5a"/><rect x="536.0" y="188" width="1" height="2" fill="#5a5a5a"/><rect x="548.0" y="188" width="1" height="2" fill="#5a5a5a"/><rect x="560.0" y="188" width="1" height="2" fill="#5a5a5a"/><rect x="572.0" y="187" width="1" height="5" fill="#666"/><rect x="584.0" y="188" width="1" height="2" fill="#5a5a5a"/><rect x="596.0" y="188" width="1" height="2" fill="#5a5a5a"/><rect x="608.0" y="188" width="1" height="2" fill="#5a5a5a"/><rect x="632.0" y="188" width="1" height="2" fill="#5a5a5a"/><rect x="644.0" y="188" width="1" height="2" fill="#5a5a5a"/><rect x="656.0" y="188" width="1" height="2" fill="#5a5a5a"/><rect x="668.0" y="187" width="1" height="5" fill="#666"/><rect x="680.0" y="188" width="1" height="2" fill="#5a5a5a"/><rect x="692.0" y="188" width="1" height="2" fill="#5a5a5a"/><rect x="704.0" y="188" width="1" height="2" fill="#5a5a5a"/><rect x="728.0" y="188" width="1" height="2" fill="#5a5a5a"/><rect x="740.0" y="188" width="1" height="2" fill="#5a5a5a"/><rect x="752.0" y="188" width="1" height="2" fill="#5a5a5a"/><rect x="764.0" y="187" width="1" height="5" fill="#666"/><rect x="776.0" y="188" width="1" height="2" fill="#5a5a5a"/><rect x="788.0" y="188" width="1" height="2" fill="#5a5a5a"/><rect x="800.0" y="188" width="1" height="2" fill="#5a5a5a"/><rect x="812.0" y="187" width="1" height="5" fill="#666"/><rect x="824.0" y="188" width="1" height="2" fill="#5a5a5a"/><rect x="836.0" y="188" width="1" height="2" fill="#5a5a5a"/></svg>
<span class="t" style="left:233.80px;top:183.65px;font-size:9.7px;line-height:9.7px;color:#5a5a5a;transform:scale(1.003,1.000);transform-origin:0 86.1%;">1</span>
<span class="t" style="left:329.80px;top:183.65px;font-size:9.7px;line-height:9.7px;color:#5a5a5a;transform:scale(1.003,1.000);transform-origin:0 86.1%;">2</span>
<span class="t" style="left:425.80px;top:183.65px;font-size:9.7px;line-height:9.7px;color:#5a5a5a;transform:scale(1.003,1.000);transform-origin:0 86.1%;">3</span>
<span class="t" style="left:521.80px;top:183.65px;font-size:9.7px;line-height:9.7px;color:#5a5a5a;transform:scale(1.003,1.000);transform-origin:0 86.1%;">4</span>
<span class="t" style="left:617.80px;top:183.65px;font-size:9.7px;line-height:9.7px;color:#5a5a5a;transform:scale(1.003,1.000);transform-origin:0 86.1%;">5</span>
<span class="t" style="left:713.80px;top:183.65px;font-size:9.7px;line-height:9.7px;color:#5a5a5a;transform:scale(1.003,1.000);transform-origin:0 86.1%;">6</span>
<svg class="b" style="left:134px;top:180px;" width="13" height="22" viewBox="0 0 13 22"><path d="M0.6 0.7h11v4l-5.5 3.3-5.5-3.3z" fill="#f4f4f4" stroke="#777" stroke-width="1.1"/><path d="M6.100 8l5.500 3.300v4h-11v-4z" fill="#fafafa" stroke="#777" stroke-width="1.100"/><rect x="0.600" y="15.300" width="11" height="6" fill="#fff" stroke="#777" stroke-width="1.100"/></svg>
<svg class="b" style="left:734.5px;top:187px;" width="13" height="10" viewBox="0 0 13 10"><path d="M6.300 1.200l5.400 3.500v4h-10.800v-4z" fill="#fff" stroke="#777" stroke-width="1.100" stroke-linejoin="round"/></svg>
<span class="t" style="left:4.00px;top:210.90px;font-size:12.2px;line-height:12.2px;color:#7d8896;transform:scale(1.011,1.000);transform-origin:0 82.8%;">©</span>
<div class="b" style="left:15px;top:207.8px;width:26.2px;height:16.5px;border:1.3px solid #6b7785;border-radius:3px;"></div>
<span class="t" style="left:18.00px;top:211.50px;font-size:11px;line-height:11px;color:#6b7785;transform:scale(0.682,1.300);transform-origin:0 86.4%;font-weight:bold;-webkit-text-stroke:0.35px #6b7785;">CTRL</span>
<span class="t" style="left:44.00px;top:211.00px;font-size:13px;line-height:13px;color:#6b7785;transform:scale(0.771,1.260);transform-origin:0 84.6%;font-weight:bold;-webkit-text-stroke:0.4px #6b7785;">ALL</span>
<div class="b" style="left:45px;top:219px;width:793px;height:480px;background:#fff;border:1px solid #c6c6c6;border-bottom:none;"></div>
<span class="t" style="left:44.00px;top:211.00px;font-size:13px;line-height:13px;color:#6b7785;transform:scale(0.771,1.260);transform-origin:0 84.6%;font-weight:bold;opacity:0.45;-webkit-text-stroke:0.4px #6b7785;clip-path:inset(72% 0 0 0);">ALL</span>
<div class="b" style="left:1108px;top:218.5px;width:9px;height:199px;background:#d9d9d9;border-radius:4.5px;"></div>
<svg class="b" style="left:84px;top:313px;" width="20" height="20" viewBox="0 0 20 20"><path d="M1.20 18.80L3.44 12.98L13.41 3.75A2.75 2.75 0 0 1 17.15 7.79L7.18 17.01Z" fill="none" stroke="#3a3a3a" stroke-width="1.100" stroke-linejoin="round"/><path d="M15.600 9.700c1.100.900 1.200 2.100.300 3" fill="none" stroke="#3a3a3a" stroke-width="1"/><path d="M3.80 0.70Q4.24 3.96 7.50 4.40Q4.24 4.84 3.80 8.10Q3.36 4.84 0.10 4.40Q3.36 3.96 3.80 0.70Z" fill="#333" /><path d="M6.90 6.80Q7.20 9.00 9.40 9.30Q7.20 9.60 6.90 11.80Q6.60 9.60 4.40 9.30Q6.60 9.00 6.90 6.80Z" fill="#333" stroke="#fff" stroke-width="1.400" paint-order="stroke"/></svg>
<div class="b" style="left:141px;top:315px;width:481px;height:289px;background:#fff;border:1px solid #d9d9d9;"></div>
<span class="t" style="left:340.00px;top:329.50px;font-size:16px;line-height:16px;color:#595959;letter-spacing:0.39px;transform:scale(1.070,1.000);transform-origin:0 84.4%;">Chart Title</span>
<svg class="b" style="left:0px;top:0px;" width="1121" height="718" viewBox="0 0 1121 718"><path d="M179.5 572.5H607" stroke="#d9d9d9" stroke-width="1"/><path d="M179.5 538.5H607" stroke="#d9d9d9" stroke-width="1"/><path d="M179.5 503.5H607" stroke="#d9d9d9" stroke-width="1"/><path d="M179.5 468.5H607" stroke="#d9d9d9" stroke-width="1"/><path d="M179.5 434.5H607" stroke="#d9d9d9" stroke-width="1"/><path d="M179.5 399.5H607" stroke="#d9d9d9" stroke-width="1"/><path d="M179.5 364.5H607" stroke="#d9d9d9" stroke-width="1"/><rect x="204" y="485.6" width="23" height="86.7" fill="#156082"/><rect x="275" y="555.0" width="23" height="17.3" fill="#156082"/><rect x="346" y="528.9" width="23" height="43.4" fill="#156082"/><rect x="418" y="398.9" width="22" height="173.4" fill="#156082"/><rect x="489" y="468.3" width="22" height="104.0" fill="#156082"/><rect x="560" y="400.6" width="22" height="171.7" fill="#156082"/></svg>
<span class="t" style="left:162.90px;top:565.50px;font-size:11px;line-height:11px;color:#595959;transform:scale(0.999,1.000);transform-origin:0 86.4%;">0</span>
<span class="t" style="left:156.50px;top:531.50px;font-size:11px;line-height:11px;color:#595959;transform:scale(1.021,1.000);transform-origin:0 86.4%;">20</span>
<span class="t" style="left:156.50px;top:496.50px;font-size:11px;line-height:11px;color:#595959;transform:scale(1.021,1.000);transform-origin:0 86.4%;">40</span>
<span class="t" style="left:156.50px;top:461.50px;font-size:11px;line-height:11px;color:#595959;transform:scale(1.021,1.000);transform-origin:0 86.4%;">60</span>
<span class="t" style="left:156.50px;top:426.50px;font-size:11px;line-height:11px;color:#595959;transform:scale(1.021,1.000);transform-origin:0 86.4%;">80</span>
<span class="t" style="left:150.40px;top:392.50px;font-size:11px;line-height:11px;color:#595959;letter-spacing:0.13px;">100</span>
<span class="t" style="left:150.40px;top:357.50px;font-size:11px;line-height:11px;color:#595959;letter-spacing:0.13px;">120</span>
<span class="t" style="left:212.00px;top:581.50px;font-size:11px;line-height:11px;color:#595959;transform:scale(0.981,1.000);transform-origin:0 86.4%;">A</span>
<span class="t" style="left:283.00px;top:581.50px;font-size:11px;line-height:11px;color:#595959;transform:scale(0.981,1.000);transform-origin:0 86.4%;">B</span>
<span class="t" style="left:354.00px;top:581.50px;font-size:11px;line-height:11px;color:#595959;transform:scale(0.906,1.000);transform-origin:0 86.4%;">C</span>
<span class="t" style="left:425.00px;top:581.50px;font-size:11px;line-height:11px;color:#595959;transform:scale(0.906,1.000);transform-origin:0 86.4%;">D</span>
<span class="t" style="left:496.00px;top:581.50px;font-size:11px;line-height:11px;color:#595959;transform:scale(0.981,1.000);transform-origin:0 86.4%;">E</span>
<span class="t" style="left:567.00px;top:581.50px;font-size:11px;line-height:11px;color:#595959;transform:scale(1.073,1.000);transform-origin:0 86.4%;">F</span>
<div class="b" style="left:0px;top:698px;width:1121px;height:20px;background:#f4f4f4;border-top:1px solid #fbfbfb;"></div>
<span class="t" style="left:-0.80px;top:704.25px;font-size:11.5px;line-height:11.5px;color:#333;transform:scale(0.923,1.000);transform-origin:0 84.8%;">ted States)</span>
<span class="t" style="left:69.30px;top:704.25px;font-size:11.5px;line-height:11.5px;color:#333;transform:scale(0.974,1.000);transform-origin:0 84.8%;">Text Predictions: On</span>
<svg class="b" style="left:189px;top:701px;" width="16" height="16" viewBox="0 0 16 16"><circle cx="7" cy="2.900" r="1.900" fill="none" stroke="#222" stroke-width="1"/><path transform="translate(7 0) scale(0.860 1) translate(-7 0)" d="M5.300 5.100L2.100 3.600a1 1 0 0 0-.8 1.900L4.300 7.100V9.900L2.800 13.700a.9.900 0 0 0 1.700.600L6.100 10.700M8.700 5.100l3.200-1.500a1 1 0 0 1 .8 1.900L9.700 7.100V8.800" fill="none" stroke="#222" stroke-width="1" stroke-linejoin="round"/><path d="M8.600 8.300l6.200 6.600M14.800 8.300l-6.200 6.600" stroke="#222" stroke-width="1.100"/></svg>
<span class="t" style="left:208.50px;top:704.25px;font-size:11.5px;line-height:11.5px;color:#222;transform:scale(0.913,1.000);transform-origin:0 84.8%;font-weight:bold;">Accessibility: Investigate</span>
<svg class="b" style="left:762px;top:702px;" width="15" height="14" viewBox="0 0 15 14"><path d="M0.5 3.5v-3h3M0.5 9.5v3h3M11.5 12.5h3v-3" fill="none" stroke="#333" stroke-width="1"/><path d="M4.5 2.5h4l3 3v5h-7z M8.5 2.5v3h3" fill="none" stroke="#333" stroke-width="1"/></svg>
<span class="t" style="left:779.80px;top:704.25px;font-size:11.5px;line-height:11.5px;color:#333;transform:scale(0.920,1.000);transform-origin:0 84.8%;">Focus</span>
<svg class="b" style="left:834px;top:702px;" width="14" height="14" viewBox="0 0 14 14"><path d="M0.600 0.900h5.900v10.800h-5.900zM12.400 0.900h-5.900v10.800h5.900zM6.500 11.700v1.100" fill="none" stroke="#222" stroke-width="1.100" stroke-linejoin="round"/><g fill="#222" shape-rendering="crispEdges"><rect x="2" y="3" width="3" height="1"/><rect x="2" y="5" width="3" height="1"/><rect x="2" y="7" width="3" height="1"/><rect x="2" y="9" width="3" height="1"/><rect x="8" y="3" width="3" height="1"/><rect x="8" y="5" width="3" height="1"/><rect x="8" y="7" width="3" height="1"/><rect x="8" y="9" width="3" height="1"/></g></svg>
<div class="b" style="left:861.3px;top:698.5px;width:39.7px;height:19.5px;background:#dadada;"></div>
<svg class="b" style="left:875px;top:702px;" width="12" height="14" viewBox="0 0 12 14"><rect x="0.500" y="0.500" width="10" height="13" fill="none" stroke="#222" stroke-width="1.100"/><g fill="#222" shape-rendering="crispEdges"><rect x="2" y="3" width="7" height="1"/><rect x="2" y="5" width="7" height="1"/><rect x="2" y="7" width="7" height="1"/><rect x="2" y="9" width="7" height="1"/><rect x="2" y="11" width="7" height="1"/></g></svg>
<svg class="b" style="left:914px;top:702px;" width="16" height="15" viewBox="0 0 16 15"><path d="M12.500 5V0.500H0.500V12h4.500" fill="none" stroke="#222" stroke-width="1.100"/><g fill="#222" shape-rendering="crispEdges"><rect x="2" y="3" width="9" height="1"/><rect x="2" y="5" width="5" height="1"/><rect x="2" y="7" width="3" height="1"/><rect x="2" y="9" width="3" height="1"/></g><circle cx="9.700" cy="9.600" r="4.100" fill="#3a3a3a"/><path d="M5.800 9.600h7.800" stroke="#f0f0f0" stroke-width="0.900"/><ellipse cx="9.700" cy="9.600" rx="1.800" ry="3.900" fill="none" stroke="#f0f0f0" stroke-width="0.600"/></svg>
<div class="b" style="left:947.5px;top:709px;width:7px;height:1px;background:#444;"></div>
<div class="b" style="left:960px;top:709px;width:100px;height:1px;background:#8a8a8a;"></div>
<div class="b" style="left:1008px;top:704px;width:5px;height:11px;background:#666;"></div>
<div class="b" style="left:1064.5px;top:709px;width:8px;height:1px;background:#444;"></div>
<div class="b" style="left:1068px;top:705.5px;width:1px;height:8px;background:#444;"></div>
<span class="t" style="left:1086.60px;top:704.25px;font-size:11.5px;line-height:11.5px;color:#333;transform:scale(0.898,1.000);transform-origin:0 84.8%;">100%</span>
<svg class="b" style="left:833px;top:238px;" width="13" height="21" viewBox="0 0 13 21"><path d="M0.6 0.8v15.6l3.7-3.5 2.9 6.6 2.3-1-2.9-6.3h5z" fill="#fff" stroke="#111" stroke-width="1.1" stroke-linejoin="round"/></svg>
</body></html>
